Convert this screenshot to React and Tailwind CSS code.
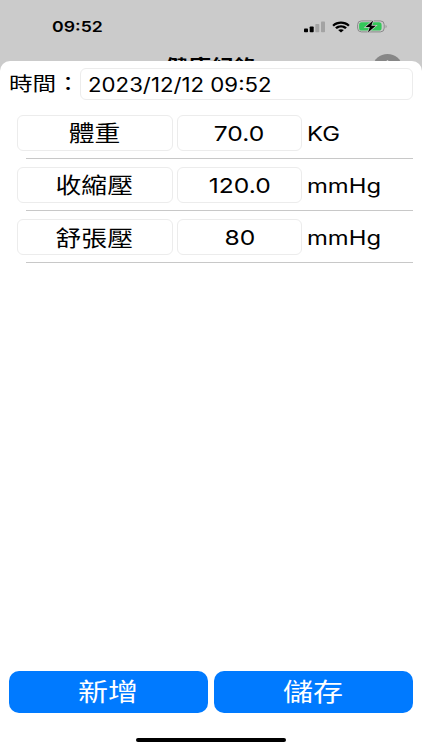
import React, { useState } from "react";

const records = [
  { name: "體重", value: "70.0", unit: "KG" },
  { name: "收縮壓", value: "120.0", unit: "mmHg" },
  { name: "舒張壓", value: "80", unit: "mmHg" },
];

function StatusBar() {
  return (
    <div className="flex h-[53px] items-center pl-[52px] pr-[34px]">
      <span className="inline-block origin-left scale-x-[1.18] text-[15px] font-semibold leading-none">09:52</span>
      <div className="ml-auto flex items-center">
        <svg width="22" height="12" viewBox="0 0 22 12">
          <rect x="0" y="7.4" width="4" height="3.8" rx="0.8" fill="#000" />
          <rect x="5.7" y="5.4" width="4" height="5.8" rx="0.8" fill="#000" />
          <rect x="11.3" y="3" width="4" height="8.2" rx="0.8" fill="#a3a3a3" />
          <rect x="17" y="0.6" width="4" height="10.6" rx="0.8" fill="#a3a3a3" />
        </svg>
        <svg className="ml-[6px]" width="18" height="12" viewBox="0 0 18 12">
          <path d="M0.3 3.9C5.2-0.5 12.8-0.5 17.7 3.9L16.1 5.5C12.1 1.9 5.9 1.9 1.9 5.5Z" fill="#000" />
          <path d="M3.1 6.5C6.4 3.5 11.6 3.5 14.9 6.5L13.2 8.1C10.8 6 7.2 6 4.8 8.1Z" fill="#000" />
          <path d="M6.1 9.1C7.8 7.8 10.2 7.8 11.9 9.1L9 11.6Z" fill="#000" />
        </svg>
        <svg className="ml-[7px]" width="31" height="13" viewBox="0 0 31 13">
          <rect x="0.6" y="0.9" width="26.6" height="11" rx="3.8" fill="none" stroke="#8a8a8a" />
          <path d="M28.6 5v3c1.3-.4 1.3-2.6 0-3z" fill="#8a8a8a" />
          <rect x="2.1" y="2.3" width="22.5" height="8.2" rx="2.6" fill="#34c759" />
          <path d="M16.2 0.4L8.5 7.1h4.4L10.9 12.6L18.8 5.7h-4.5Z" fill="#000" stroke="#cbcbcb" strokeWidth="1.4" paintOrder="stroke" />
        </svg>
      </div>
    </div>
  );
}

function RecordRow({ name, value, unit }) {
  return (
    <div className="flex h-[52.2px] flex-col pl-[17px] pr-[9px]">
      <div className="flex h-[36px] items-center">
        <div className="flex h-full w-[155.5px] items-center justify-center rounded-[6px] border border-[#ececec]">
          <span className="inline-block scale-x-[1.2] pt-[2px] text-[21.5px] leading-none">{name}</span>
        </div>
        <div className="ml-[4.5px] flex h-full w-[125px] items-center justify-center rounded-[6px] border border-[#ececec]">
          <span className="inline-block scale-x-[1.2] pt-[2px] text-[20.5px] leading-none">{value}</span>
        </div>
        <span className="ml-[5px] inline-block origin-left scale-x-[1.19] pt-px text-[20px] leading-none">{unit}</span>
      </div>
      <div className="ml-[9px] mt-[7px] h-px bg-[#c8c8c8]" />
    </div>
  );
}

function App() {
  const [time, setTime] = useState("2023/12/12 09:52");

  return (
    <div className="flex h-[750px] w-[422px] flex-col overflow-hidden bg-[#cbcbcb] font-['Inter','Noto_Sans_CJK_TC',sans-serif] text-black">
      <StatusBar />
      {/* navigation bar, mostly covered by the sheet */}
      <div className="relative h-[8px]">
        <h1 className="absolute left-0 top-[5px] w-full text-center text-[19px] font-bold leading-[20px]">
          <span className="inline-block scale-x-[1.2]">健康紀錄</span>
        </h1>
        <svg className="absolute left-[373px] top-[1px]" width="29" height="24" viewBox="0 0 29 24">
          <ellipse cx="14.5" cy="12" rx="14" ry="12" fill="#878787" />
          <path d="M14.5 6v12M8 12h13" stroke="#cbcbcb" strokeWidth="1.5" />
        </svg>
      </div>

      <div className="relative flex flex-1 flex-col rounded-t-[10px] bg-white pt-[7px]">
        <div className="flex h-[32px] items-center pl-[9px] pr-[9px]">
          <label className="w-[71px] shrink-0 whitespace-nowrap pt-[2px] text-[19.5px] leading-none">
            <span className="inline-block origin-left scale-x-[1.21]">時間：</span>
          </label>
          <div className="h-full flex-1 rounded-[6px] border border-[#ececec] pl-[7px]">
            <input
              value={time}
              onChange={(e) => setTime(e.target.value)}
              className="h-full w-[260px] origin-left scale-x-[1.14] bg-transparent pt-px text-[19.5px] leading-none outline-none"
            />
          </div>
        </div>

        <div className="mt-[15px]">
          {records.map((item) => (
            <RecordRow key={item.name} {...item} />
          ))}
        </div>

        <div className="mt-auto flex gap-[6px] px-[9px] text-[25px] leading-none text-white">
          <button className="h-[42px] flex-1 rounded-[10px] bg-[#007aff]">
            <span className="inline-block scale-x-[1.2] pt-px">新增</span>
          </button>
          <button className="h-[42px] flex-1 rounded-[10px] bg-[#007aff]">
            <span className="inline-block scale-x-[1.2] pt-px">儲存</span>
          </button>
        </div>
        <div className="mx-auto mb-[8px] mt-[25px] h-[4px] w-[150px] rounded-full bg-black" />
      </div>
    </div>
  );
}

export default App;
